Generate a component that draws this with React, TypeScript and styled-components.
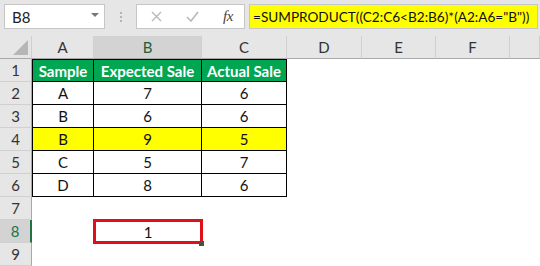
import React from "react";
import styled, { createGlobalStyle, css } from "styled-components";

const Global = createGlobalStyle`
  html, body { margin: 0; padding: 0; background: #fff; overflow: hidden; }
  body { font-family: Lato, "Open Sans", "Liberation Sans", sans-serif; }
`;

const Window = styled.div`
  width: 540px;
  height: 266px;
  display: flex;
  flex-direction: column;
  background: #fff;
`;

/* ---------- formula toolbar ---------- */

const Toolbar = styled.div`
  height: 39px;
  box-sizing: border-box;
  padding: 4px 2px 0 4px;
  background: #e6e6e6;
  display: flex;
  align-items: flex-start;
`;

const NameBox = styled.div`
  width: 101px;
  height: 25px;
  box-sizing: border-box;
  background: #fff;
  border: 1px solid #c6c6c6;
  display: flex;
  align-items: center;
  justify-content: space-between;
  padding: 0 5px 0 7px;
  font-size: 15px;
  color: #222;
`;

const Caret = styled.span`
  width: 0;
  height: 0;
  border-left: 4px solid transparent;
  border-right: 4px solid transparent;
  border-top: 4px solid #777;
  margin-bottom: 3px;
`;

const Grip = styled.div`
  width: 31px;
  height: 25px;
  display: flex;
  flex-direction: column;
  align-items: center;
  justify-content: center;
  gap: 2px;
  span {
    width: 2px;
    height: 2px;
    background: #b4b4b4;
  }
`;

const ButtonBox = styled.div`
  width: 109px;
  height: 25px;
  box-sizing: border-box;
  background: #fff;
  border: 1px solid #c6c6c6;
  display: flex;
  align-items: center;
  padding-left: 14px;
`;

const IconSlot = styled.span<{ $w: number }>`
  width: ${(p) => p.$w}px;
  display: flex;
  align-items: center;
  justify-content: flex-start;
`;

const Fx = styled.span`
  font-family: "Liberation Serif", "DejaVu Serif", serif;
  font-style: italic;
  font-size: 15px;
  color: #444;
  letter-spacing: -0.5px;
`;

const FormulaInput = styled.div`
  margin-left: 4px;
  width: 289px;
  height: 25px;
  box-sizing: border-box;
  background: #ffff00;
  border: 1px solid #c6c6c6;
  display: flex;
  align-items: center;
  padding-left: 3px;
  font-size: 13.6px;
  color: #111;
  white-space: nowrap;
  overflow: hidden;
`;

/* ---------- sheet grid ---------- */

const Sheet = styled.div`
  display: grid;
  grid-template-columns: 32px 62px 108px 85px 75px 74px 74px 1fr;
  grid-auto-rows: 23px;
  font-size: 15px;
`;

const Corner = styled.div`
  position: relative;
  background: #e6e6e6;
  border-right: 1px solid #d0d0d0;
  border-bottom: 1px solid #a8a8a8;
  &::after {
    content: "";
    position: absolute;
    right: 3px;
    bottom: 3px;
    width: 0;
    height: 0;
    border-left: 15px solid transparent;
    border-bottom: 15px solid #b6b6b6;
  }
`;

const ColHead = styled.div<{ $active?: boolean }>`
  background: ${(p) => (p.$active ? "#d3d3d3" : "#e6e6e6")};
  color: ${(p) => (p.$active ? "#1f5c3a" : "#333")};
  border-right: 1px solid #d0d0d0;
  border-bottom: 1px solid #a8a8a8;
  display: flex;
  align-items: center;
  justify-content: center;
  box-sizing: border-box;
`;

const RowHead = styled.div<{ $active?: boolean }>`
  background: ${(p) => (p.$active ? "#d3d3d3" : "#e6e6e6")};
  color: ${(p) => (p.$active ? "#217346" : "#333")};
  border-bottom: 1px solid #d0d0d0;
  border-right: ${(p) => (p.$active ? "2px solid #217346" : "1px solid #a8a8a8")};
  display: flex;
  align-items: center;
  justify-content: center;
  box-sizing: border-box;
`;

type Tone = "plain" | "head" | "mark";

const Cell = styled.div<{ $tone?: Tone; $boxed?: boolean; $left?: boolean; $top?: boolean }>`
  box-sizing: border-box;
  display: flex;
  align-items: center;
  justify-content: center;
  color: #111;
  white-space: nowrap;
  ${(p) =>
    p.$boxed &&
    css`
      border-right: 1px solid #000;
      border-bottom: 1px solid #000;
    `}
  ${(p) => p.$left && css`border-left: 1px solid #000;`}
  ${(p) => p.$top && css`border-top: 1px solid #000;`}
  ${(p) =>
    p.$tone === "head" &&
    css`
      background: #00a651;
      color: #fff;
      font-weight: 700;
    `}
  ${(p) => p.$tone === "mark" && css`background: #ffff00;`}
`;

const ResultCell = styled.div`
  position: relative;
  box-sizing: border-box;
  display: flex;
  align-items: center;
  justify-content: center;
  color: #111;
  outline: 3px solid #e0101a;
  outline-offset: -2px;
  &::after {
    content: "";
    position: absolute;
    right: -2px;
    bottom: -3px;
    width: 5px;
    height: 5px;
    background: #3b5a3b;
  }
`;

const columns = ["A", "B", "C", "D", "E", "F", ""];

const tableRows: { cells: string[]; tone: Tone }[] = [
  { cells: ["Sample", "Expected Sale", "Actual Sale"], tone: "head" },
  { cells: ["A", "7", "6"], tone: "plain" },
  { cells: ["B", "6", "6"], tone: "plain" },
  { cells: ["B", "9", "5"], tone: "mark" },
  { cells: ["C", "5", "7"], tone: "plain" },
  { cells: ["D", "8", "6"], tone: "plain" },
];

const Blank = () => <Cell />;

export default function App() {
  return (
    <Window>
      <Global />
      <Toolbar>
        <NameBox>
          <span>B8</span>
          <Caret />
        </NameBox>
        <Grip>
          <span />
          <span />
          <span />
        </Grip>
        <ButtonBox>
          <IconSlot $w={35}>
            <svg width="11" height="11" viewBox="0 0 11 11">
              <path d="M1 1 L10 10 M10 1 L1 10" stroke="#b8b8b8" strokeWidth="1.4" fill="none" />
            </svg>
          </IconSlot>
          <IconSlot $w={37}>
            <svg width="13" height="11" viewBox="0 0 13 11">
              <path d="M1 6 L5 10 L12 1" stroke="#b8b8b8" strokeWidth="1.6" fill="none" />
            </svg>
          </IconSlot>
          <IconSlot $w={20}>
            <Fx>fx</Fx>
          </IconSlot>
        </ButtonBox>
        <FormulaInput>=SUMPRODUCT((C2:C6&lt;B2:B6)*(A2:A6="B"))</FormulaInput>
      </Toolbar>

      <Sheet>
        <Corner />
        {columns.map((c, i) => (
          <ColHead key={i} $active={c === "B"}>
            {c}
          </ColHead>
        ))}

        {tableRows.map((row, r) => (
          <React.Fragment key={r}>
            <RowHead>{r + 1}</RowHead>
            {row.cells.map((v, c) => (
              <Cell key={c} $tone={row.tone} $boxed $left={c === 0} $top={r === 0}>
                {v}
              </Cell>
            ))}
            <Blank />
            <Blank />
            <Blank />
            <Blank />
          </React.Fragment>
        ))}

        <RowHead>7</RowHead>
        {columns.map((_, i) => (
          <Blank key={i} />
        ))}

        <RowHead $active>8</RowHead>
        <Blank />
        <ResultCell>1</ResultCell>
        {columns.slice(2).map((_, i) => (
          <Blank key={i} />
        ))}

        <RowHead>9</RowHead>
        {columns.map((_, i) => (
          <Blank key={i} />
        ))}
      </Sheet>
    </Window>
  );
}
